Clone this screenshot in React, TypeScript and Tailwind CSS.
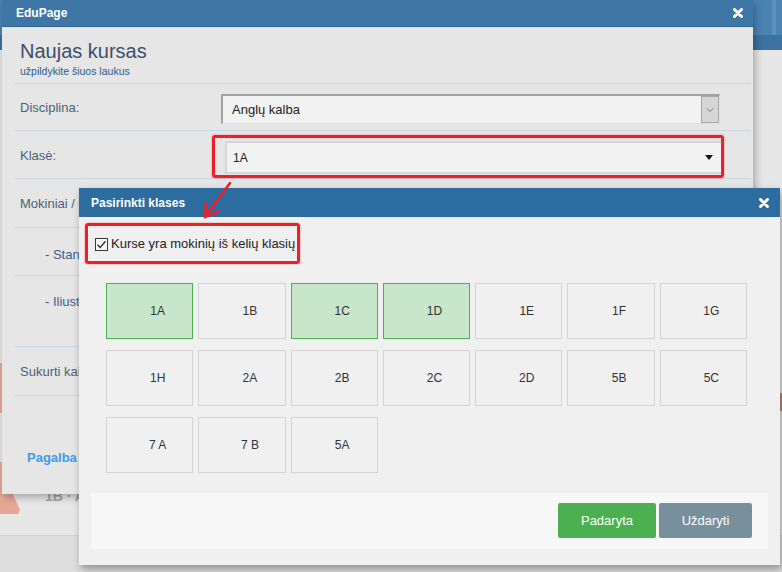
import { ChevronDown } from 'lucide-react';

const classes = [
  { name: '1A', on: true },
  { name: '1B', on: false },
  { name: '1C', on: true },
  { name: '1D', on: true },
  { name: '1E', on: false },
  { name: '1F', on: false },
  { name: '1G', on: false },
  { name: '1H', on: false },
  { name: '2A', on: false },
  { name: '2B', on: false },
  { name: '2C', on: false },
  { name: '2D', on: false },
  { name: '5B', on: false },
  { name: '5C', on: false },
  { name: '7 A', on: false },
  { name: '7 B', on: false },
  { name: '5A', on: false },
];

function CloseIcon() {
  return (
    <svg width="10" height="10" viewBox="0 0 10 10">
      <path d="M1.5 1.5 L8.5 8.5 M8.5 1.5 L1.5 8.5" stroke="white" strokeWidth="3" strokeLinecap="round" />
    </svg>
  );
}

function Row({ label, height, children, labelClass }: { label: string; height: string; children?: React.ReactNode; labelClass?: string }) {
  return (
    <div className={`flex border-b border-[#c9d6e1] ml-[13px] mr-[2px] ${height}`}>
      <div className={`w-[205px] shrink-0 text-[13px] pl-[5px] whitespace-nowrap ${labelClass ?? 'text-[#4b5f75] pt-[14px]'}`}>{label}</div>
      <div className="flex-1 pt-[10px]">{children}</div>
    </div>
  );
}

function BackgroundPage() {
  return (
    <>
      <div className="absolute left-0 top-0 w-full h-[35px] bg-[#4a84b4]" />
      <div className="absolute left-[772px] top-0 w-[4px] h-[35px] bg-[#5a93c1]" />
      <div className="absolute left-0 top-[35px] w-full h-[15px] bg-[#3b72a0]" />
      <div className="absolute left-0 top-[535px] w-full h-[37px] bg-[#dedede] border-t border-[#d2d2d2]" />
      <div className="absolute left-0 top-[363px] w-[3px] h-[50px] bg-[#e6a796]" />
      <svg className="absolute left-0 top-[462px]" width="22" height="52" viewBox="0 0 22 52">
        <path d="M0 0 L8 0 L12 30 L20 48 L18 52 L0 52 Z" fill="#e6a796" />
      </svg>
      <div className="absolute left-[45px] top-[487px] text-[14px] leading-[18px] font-bold text-[#a3a3a3]">1B · A</div>
      <div className="absolute left-[778px] top-[393px] w-[4px] h-[18px] bg-[#b98a7c]" />
    </>
  );
}

function OuterDialog() {
  return (
    <div className="absolute left-[2px] top-0 w-[751px] h-[494px] bg-[#e6e6e6] shadow-[2px_3px_8px_rgba(0,0,0,0.3)] flex flex-col">
      <div className="h-[27px] bg-[#3e76a5] border-b border-[#2f628c] flex items-center justify-between pl-[14px] pr-[10px]">
        <span className="text-white font-bold text-[12px]">EduPage</span>
        <CloseIcon />
      </div>
      <div className="h-[57px] border-b border-[#c9d6e1] ml-[13px] mr-[2px] pl-[5px] pt-[11px]">
        <div className="text-[20px] leading-[26px] text-[#3d5068]">Naujas kursas</div>
        <div className="text-[10.5px] leading-[14px] text-[#2e5b8c]">užpildykite šiuos laukus</div>
      </div>
      <Row label="Disciplina:" height="h-[47px]">
        <div className="ml-[1px] w-[499px] h-[30px] bg-[#f2f2f2] border-t-2 border-l-2 border-[#a2a2a2] border-r border-b border-r-[#e0e0e0] border-b-[#e0e0e0] flex items-center justify-between">
          <span className="pl-[9px] text-[13px] text-[#222]">Anglų kalba</span>
          <div className="w-[18px] h-full bg-[#d6d6d6] border border-[#a8a8a8] flex items-center justify-center">
            <ChevronDown size={12} strokeWidth={1.5} color="#555" />
          </div>
        </div>
      </Row>
      <Row label="Klasė:" height="h-[48px]" labelClass="text-[#4b5f75] pt-[15px]">
        <div className="ml-[5px] w-[498px] h-[33px] bg-[#f2f2f2] border-2 border-[#d6d6d6] flex items-center justify-between pl-[6px] pr-[8px]">
          <span className="text-[12px] text-[#222]">1A</span>
          <svg width="8" height="5" viewBox="0 0 8 5">
            <path d="M0 0 L8 0 L4 5 Z" fill="#111" />
          </svg>
        </div>
      </Row>
      <Row label="Mokiniai / Grupės" height="h-[49px]" labelClass="text-[#4b5f75] pt-[15px]" />
      <Row label="- Standartinis" height="h-[48px]" labelClass="text-[12px] text-[#3d5f86] pt-[17px] pl-[30px]" />
      <Row label="- Iliustracijos" height="h-[71px]" labelClass="text-[12px] text-[#3d5f86] pt-[16px] pl-[30px]" />
      <Row label="Sukurti kaip kopiją" height="h-[49px]" labelClass="text-[13px] text-[#4b5f75] pt-[15px]" />
      <div className="pl-[25px] pt-[52px] text-[13px] font-bold text-[#3d9be9]">Pagalba</div>
    </div>
  );
}

function InnerDialog() {
  return (
    <div className="absolute left-[79px] top-[188px] w-[701px] bg-[#f0f0f0] shadow-[2px_4px_8px_rgba(0,0,0,0.35)]">
      <div className="h-[29px] bg-[#2c6c9f] flex items-center justify-between pl-[12px] pr-[11px]">
        <span className="text-white font-bold text-[12px]">Pasirinkti klases</span>
        <CloseIcon />
      </div>
      <div className="pt-[19px] pb-[16px]">
        <div className="ml-[16px] h-[16px] flex items-center gap-[3px]">
          <svg width="13" height="13" viewBox="0 0 13 13">
            <rect x="0.5" y="0.5" width="12" height="12" fill="#f7f7f7" stroke="#3a3a3a" />
            <path d="M2.5 6.8 L5.2 9.5 L10.5 3.2" fill="none" stroke="#333" strokeWidth="1.4" />
          </svg>
          <span className="text-[13px] text-[#222]">Kurse yra mokinių iš kelių klasių</span>
        </div>
        <div className="mt-[31px] ml-[27px] w-[641px] grid grid-cols-7 gap-x-[5px] gap-y-[11px]">
          {classes.map((c) => (
            <div
              key={c.name}
              className={`h-[56px] flex items-center justify-center pl-[16px] text-[12px] text-[#333] border ${
                c.on ? 'bg-[#c8e6c9] border-[#4caf50]' : 'bg-[#f0f0f0] border-[#d4d4d4]'
              }`}
            >
              {c.name}
            </div>
          ))}
        </div>
        <div className="mt-[20px] mx-[12px] h-[56px] bg-[#f7f7f7] flex items-center justify-end gap-[3px] pr-[16px] pb-[1px]">
          <button className="w-[98px] h-[35px] rounded-[2px] bg-[#4caf50] text-white text-[13px]">Padaryta</button>
          <button className="w-[93px] h-[35px] rounded-[2px] bg-[#78909c] text-white text-[13px]">Uždaryti</button>
        </div>
      </div>
    </div>
  );
}

function Annotations() {
  return (
    <>
      <div className="absolute left-[212px] top-[135px] w-[512px] h-[43px] rounded-[3px] border-[3px] border-[#ee1f2a] shadow-[0_0_2px_rgba(238,31,42,0.6)]" />
      <div className="absolute left-[85px] top-[223px] w-[215px] h-[41px] rounded-[3px] border-[3px] border-[#ee1f2a] shadow-[0_0_2px_rgba(238,31,42,0.6)]" />
      <svg className="absolute left-0 top-0" width="782" height="572" viewBox="0 0 782 572">
        <path d="M230 183 L205 217" stroke="#ee1f2a" strokeWidth="2.5" strokeLinecap="round" />
        <path d="M206 203 L205 217 L219 211" fill="none" stroke="#ee1f2a" strokeWidth="2.5" strokeLinecap="round" strokeLinejoin="round" />
      </svg>
    </>
  );
}

export default function App() {
  return (
    <div className="relative w-[782px] h-[572px] overflow-hidden bg-[#e7e7e7] font-['Liberation_Sans',Arial,sans-serif]">
      <BackgroundPage />
      <OuterDialog />
      <InnerDialog />
      <Annotations />
    </div>
  );
}
